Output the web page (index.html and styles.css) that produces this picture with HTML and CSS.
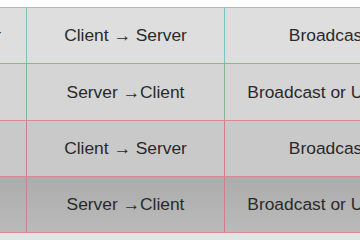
FILE: index.html
```html
<!DOCTYPE html>
<html>
<head>
<meta charset="utf-8">
<link rel="stylesheet" href="styles.css">
</head>
<body>
<div class="page">
  <div class="top-strip"></div>
  <div class="table">
    <div class="row row-1">
      <div class="cell cell-name"><span>Discover</span></div>
      <div class="cell cell-dir">Client → Server</div>
      <div class="cell cell-mode">Broadcast</div>
    </div>
    <div class="row row-2">
      <div class="cell cell-name"></div>
      <div class="cell cell-dir">Server →Client</div>
      <div class="cell cell-mode">Broadcast or Unicast</div>
    </div>
    <div class="row row-3">
      <div class="cell cell-name"></div>
      <div class="cell cell-dir">Client → Server</div>
      <div class="cell cell-mode">Broadcast</div>
    </div>
    <div class="row row-4">
      <div class="cell cell-name"></div>
      <div class="cell cell-dir">Server →Client</div>
      <div class="cell cell-mode">Broadcast or Unicast</div>
    </div>
  </div>
  <div class="bottom-strip"></div>
</div>
</body>
</html>
```

FILE: styles.css
```css
html, body {
  margin: 0;
  padding: 0;
  width: 360px;
  height: 240px;
  overflow: hidden;
  background: #ffffff;
}

.page {
  display: flex;
  flex-direction: column;
  width: 360px;
  height: 240px;
  font-family: "Liberation Sans", Arial, sans-serif;
  font-size: 17.4px;
  color: #2a2a2a;
}

.top-strip {
  height: 7px;
  background: #ffffff;
  flex: none;
}

.table {
  display: flex;
  flex-direction: column;
  flex: none;
}

.row {
  display: flex;
  height: 55px;
  border-top: 1px solid;
}

.row-1 {
  border-top-color: #8ccaca;
  background: #dedede;
}
.row-2 {
  height: 56px;
  border-top-color: #86b88e;
  background: #d5d5d5;
}
.row-3 {
  border-top-color: #d68a94;
  background: #c9c9c9;
}
.row-4 {
  border-top-color: #d68a94;
  background: linear-gradient(#acacac, #bababa);
  border-bottom: 1px solid #d68a94;
}

.cell {
  display: flex;
  align-items: center;
  justify-content: center;
  white-space: nowrap;
  overflow: hidden;
  flex: none;
}

.cell-name {
  width: 27px;
  justify-content: flex-end;
  padding-right: 25px;
  box-sizing: border-box;
  border-right: 1px solid;
}

.cell-dir {
  width: 197px;
  border-right: 1px solid;
}

.cell-mode {
  width: 206px;
}

.row-1 .cell-name, .row-1 .cell-dir { border-right-color: #7cc2c2; }
.row-2 .cell-name, .row-2 .cell-dir { border-right-color: #84b48a; }
.row-3 .cell-name, .row-3 .cell-dir,
.row-4 .cell-name, .row-4 .cell-dir { border-right-color: #cf7f8a; }

.bottom-strip {
  flex: 1;
  background: #e4e4e4;
}
```
